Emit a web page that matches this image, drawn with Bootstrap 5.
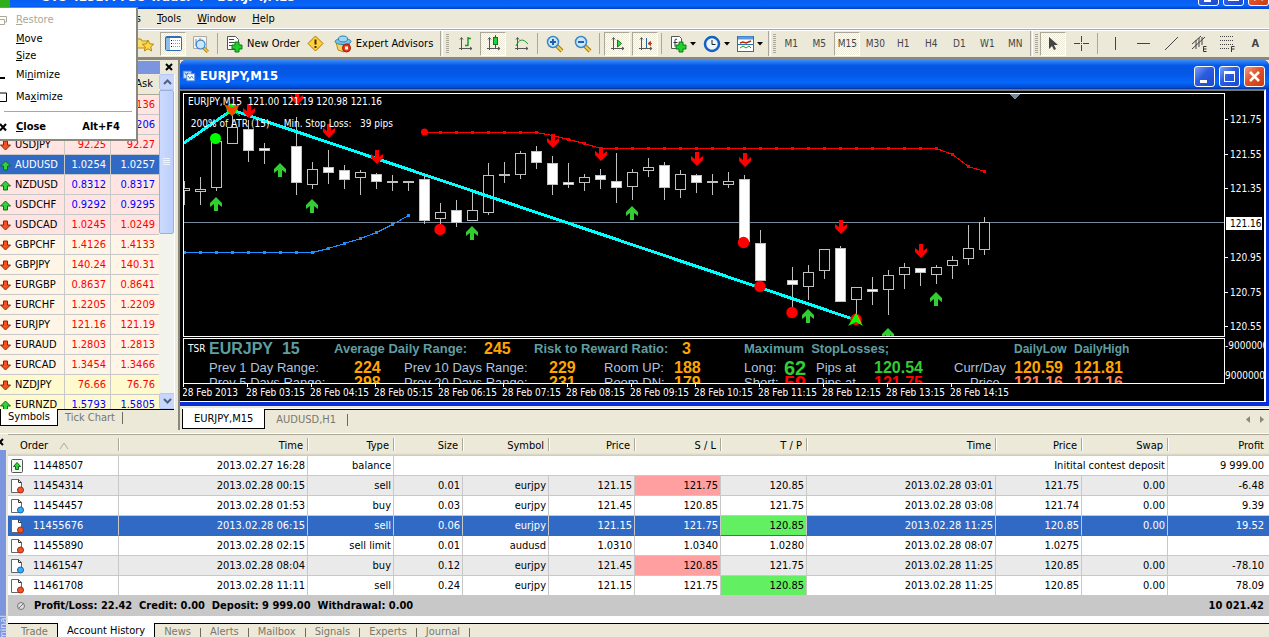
<!DOCTYPE html>
<html lang="en">
<head>
<meta charset="utf-8">
<meta name="viewport" content="width=device-width, initial-scale=1">
<title>Trader 4 - EURJPY,M15</title>
<link rel="stylesheet" href="https://cdn.jsdelivr.net/npm/bootstrap@5.3.0/dist/css/bootstrap.min.css">
<style>
:root{--face:#ece9d8;--line:#c8c8c8;--ui:"DejaVu Sans Condensed","Noto Sans",sans-serif}
body{height:100vh;overflow:hidden;background:var(--face);font:11px/16px var(--ui);color:#000}
button,input{font:inherit;color:inherit}
a{color:inherit;text-decoration:none}
svg{display:block;flex:none}
.flat{border:0;background:none;padding:0}
/* application title bar and menus */
.apptitle{height:9px;overflow:hidden;background:linear-gradient(#0a5cf0,#0667fb 60%,#0040c8);color:#fff;font-weight:700;font-size:13px;padding-left:42px}
.appname{line-height:20px;margin-bottom:2px}
.logo-chip{width:10px;height:9px;background:#2fae1c;margin-left:-42px;margin-right:32px}
.winbtn{width:21px;height:21px;border:1px solid #fff;border-radius:3px;background:linear-gradient(135deg,#7ba0f5,#2a5be0 45%,#1c49cf)}
.winbtn.close-x{background:linear-gradient(135deg,#f0a088,#e0512b 45%,#cc3c12)}
.apptitle .winbtn{margin-bottom:3px}
.menus{height:20px;border-bottom:1px solid #fff}
.hidden-menus{width:141px}
.toolrow{height:31px;border-top:1px solid #aca899;border-bottom:3px solid #8a887c;box-shadow:inset 0 1px #fff;padding-left:131px;color:#444;white-space:nowrap}
.toolrow>*{flex-shrink:0}
.tool{width:28px;height:25px;display:flex;align-items:center;justify-content:center}
.tool.drop{width:34px;gap:3px}
.tool.wide{width:auto;color:#000;gap:4px;padding:0 2px 0 4px}
.tool.advisors{padding-right:6px}
.tool.pressed{width:26px;margin:0 1px;height:24px;border:1px solid #aca899;border-right-color:#fff;border-bottom-color:#fff;background:repeating-conic-gradient(#fff 0 25%,#ece9d8 0 50%) 0 0/2px 2px}
.vsep{width:1px;height:21px;background:#aca899;margin:0 3px 0 2px}
.vsep2{width:3px;height:25px;border-left:1px solid #aca899;border-right:1px solid #fff;margin:0 1px}
.grip{width:3px;height:20px;background:repeating-linear-gradient(#aca899 0 1px,transparent 1px 2px);margin:0 1px}
.advisors+.vsep2+.grip{margin:0 2px}
.tf{font-size:10px}
/* system menu */
.sysmenu{top:7px;left:0;width:138px;background:#fff;border:1px solid #8a887c;border-left:0;border-width:1px 2px 2px 0;z-index:5;padding:2px 0 0}
.sysmenu button{display:flex;align-items:center;height:20px;width:100%;text-align:left}
.sysmenu .mark-cell{width:16px}
.sysmenu .short{height:17px}
.sysmenu .roomy{height:22px}
.sysmenu .tall{height:24px}
.sysmenu .grayed{color:#aca899}
.sysmenu hr{margin:3px 4px;opacity:1;border-color:#aca899}
/* market watch */
.watch{width:180px;border-right:2px solid #8a887c}
.watchhead{height:14px;padding-right:5px}
.watchbar{background:#7b96de;height:13px;margin-right:5px}
.listwrap{flex:1 1 0;min-height:0;overflow:hidden;border-right:1px solid #fff;margin-right:3px}
.quotes{width:159px;table-layout:fixed;border-collapse:separate;border-spacing:0}
.quotes th{height:21px;background:var(--face);font-weight:400;text-align:right;padding:0 6px 0 0;border-bottom:1px solid #aca899}
.quotes td{height:20px;padding:0 4px 0 0;text-align:right;border-right:1px solid var(--line);border-bottom:1px solid var(--line);line-height:19px;background:#fff5e6;color:#f00;overflow:hidden}
.quotes td:first-child{text-align:left;color:#000;padding:0}
.quotes td:first-child svg{display:inline-block;margin-right:4px}
.quotes td:last-child{border-right:0}
.quotes .pink td{background:#ffe4e1}
.quotes .lemon td{background:#fffacd}
.quotes .up td+td{color:#00f}
.quotes .sel td,.quotes .sel td+td,.quotes .sel td:first-child{background:#316ac5;color:#fff}
.sbar{width:17px;background:#f3f3ee}
.sbtn{width:16px;height:16px;border:1px solid #b4c8f6;border-radius:2px;background:#c8d6fb;display:flex;align-items:center;justify-content:center}
.thumb{height:144px;width:15px;border:1px solid #98b0e0;border-radius:2px;background:linear-gradient(90deg,#cbdafe,#bccffb);display:flex;align-items:center;justify-content:center}
.tabs{border-top:1px solid #000;color:#7a776c}
.tabs .on{background:#fff;color:#000;border:1px solid #000;border-top:0;margin-top:-1px}
.tabs button{padding:0 10px}
.watch .tabs button{padding:0 7px}
.tick{width:1px;height:12px;background:#6d6a5f}
/* chart window */
.mdi{background:#0831d9;border-radius:6px 6px 0 0}
.mdititle{height:29px;border-radius:6px 6px 0 0;background:linear-gradient(#3c8cf8,#0557e6 20%,#0557e6 50%,#0667fb 80%,#0048cc);color:#fff;font-weight:700;font-size:13px;padding:4px 4px 0 2px;border-bottom:1px solid #0038b0}
.chartbody{background:#000;border-top:2px solid #77766c;border-right:2px solid #fff;border-bottom:1px solid #fff;margin-right:3px;color:#fff;padding:2px 0 0 3px;font-size:10px;line-height:14px}
.winfoot{height:4px}
.pane{border:1px solid #fff;position:relative;overflow:hidden}
.price{height:244px}
.overlay-text{left:4px;top:1px}
.axis{width:39px}
.scale{height:220px;margin-top:20px;margin-bottom:6px}
.scale div{padding-left:5px;line-height:13px;position:relative;white-space:nowrap}
.scale div::before{content:"";position:absolute;left:0;top:6px;width:3px;height:1px;background:#fff}
.scale .now{background:#fff;color:#000;margin:0 2px 0 1px;padding-left:4px}
.dates{height:17px;font-size:10px;margin-left:-1px}
.dates span{width:64px;flex:none;white-space:nowrap;line-height:18px;position:relative}
.dates span::before{content:"";position:absolute;left:1px;top:0;width:1px;height:3px;background:#fff}
.stats{height:46px;margin-top:1px}
.statgrid{display:grid;grid-template-rows:20px 18px 12px;align-items:center;padding-left:4px;grid-template-columns:21px 125px 20px 50px 80px 50px 15px 55px 70px 70px 40px 32px 58px 80px 60px 60px 60px;font:13px/12px "Liberation Sans",sans-serif;color:#b0c4de;white-space:nowrap}
.statgrid b{font-size:16px}
.statgrid>*{width:0}
.statgrid .lbl{font-size:13px;color:#5f9ea0}
.statgrid .sm{font-size:12px;color:#5f9ea0}
.statgrid .tsr{font:10px/12px var(--ui);color:#fff}
.statgrid .cad{color:#5f9ea0}
.statgrid .big{font-size:20px}
.c1{grid-column:1}.c2{grid-column:2}.c3{grid-column:3}.c4{grid-column:4}.c5{grid-column:5}.c6{grid-column:6}.c7{grid-column:7}.c8{grid-column:8}.c9{grid-column:9}.c10{grid-column:10}.c11{grid-column:11}.c12{grid-column:12}.c13{grid-column:13}.c14{grid-column:14}.c15{grid-column:15}.c16{grid-column:16}.c17{grid-column:17}
.org{color:#ffa500}.grn{color:#32cd32}.rd{color:#f00}.crl{color:#ff7f50}
.charttabs{height:20px;border-top:1px solid #000;margin:3px 0 1px 2px;box-shadow:0 -1px #fff}
.charttabs button{padding:0 11px}
/* terminal */
.terminal{border-top:1px solid #fff;margin-top:3px}
.side{width:8px;overflow:hidden;background:var(--face)}
.side .flat{height:16px}
.sidebar-blue{background:#7b96de;margin-right:2px;color:#d5dff7}
.sidebar-blue span{writing-mode:vertical-rl;transform:rotate(180deg);font-size:10px;line-height:8px;margin-bottom:-6px}
.orders{width:100%;table-layout:fixed;border-collapse:separate;border-spacing:0;border-top:1px solid #aca899;background:#fff}
.orders th{font-weight:400;height:21px;background:linear-gradient(var(--face) 18px,#cbc7b8);text-align:right;padding:0 5px 0 0;line-height:18px;position:relative}
.orders th+th::before{content:"";position:absolute;left:-1px;top:3px;width:2px;height:13px;background:linear-gradient(90deg,#aca899 50%,#fff 50%)}
.orders th:first-child,.orders td:first-child{text-align:left}
.orders th:first-child{padding-left:12px}
.orders td{height:20px;line-height:19px;text-align:right;padding:0 2px 0 0;border-right:1px solid var(--line);border-bottom:1px solid var(--line);white-space:nowrap}
.orders td:last-child{border-right:0;padding-right:5px}
.orders td:first-child svg{display:inline-block;margin:0 9px 0 2px}
.orders .alt td{background:#eaeaea}
.orders .sel td{background:#316ac5;color:#fff;border-bottom-color:#316ac5}
.orders .alt .hit-sl{background:#ff9f9f}
.orders tr .hit-tp,.orders .sel .hit-tp{background:#62f062;color:#000}
.summary{height:20px;background:#c8c8c8;font-weight:700;padding:0 5px 0 4px}
.termtabs{height:24px;margin-top:7px;box-shadow:0 -7px #fff;line-height:14px;align-items:flex-start}
.termtabs button{padding:1px 9px 0}
.termtabs .on{padding-bottom:9px}
</style>
</head>
<body class="d-flex flex-column">
<svg width="0" height="0" class="position-absolute" aria-hidden="true">
<defs>
<symbol id="q-dn" viewBox="0 0 11 11"><path d="M3.500 1h4v4h3L5.500 10 .5 5h3z" fill="#f4511e" stroke="#8c2408"/></symbol>
<symbol id="q-up" viewBox="0 0 11 11"><path d="M3.500 10h4V6h3L5.500 1 .5 6h3z" fill="#2fd43c" stroke="#0c6b14"/></symbol>
<symbol id="doc" viewBox="0 0 14 16"><path d="M1.500 1.500h7l3 3v10h-10z" fill="#fff" stroke="#666"/><path d="M8.500 1.500v3h3" fill="none" stroke="#333"/></symbol>
<symbol id="o-sell" viewBox="0 0 14 16"><use href="#doc"/><circle cx="10.500" cy="12" r="3" fill="#f2552c" stroke="#a82c0c"/></symbol>
<symbol id="o-buy" viewBox="0 0 14 16"><use href="#doc"/><circle cx="10.500" cy="12" r="3" fill="#35b0f5" stroke="#1266a8"/></symbol>
<symbol id="axes" viewBox="0 0 17 17"><path d="M4.500 15V3M2 13.500h13M3 4.500l1.500-2 1.500 2M13 12l2 1.500-2 1.500" fill="none" stroke="#555"/></symbol>
<symbol id="caret" viewBox="0 0 6 4"><path d="M0 0h6L3 3.500z" fill="#000"/></symbol>
<symbol id="lens" viewBox="0 0 18 18"><path d="M11 11l5 5" stroke="#a87a10" stroke-width="4"/><path d="M11 11l5 5" stroke="#f3cf4a" stroke-width="2"/><circle cx="7" cy="7" r="5.500" fill="#c9e6fb" stroke="#3c86c8" stroke-width="1.500"/></symbol>
<symbol id="plus" viewBox="0 0 12 12"><path d="M4 1h4v3h3v4H8v3H4V8H1V4h3z" fill="#21cf2e" stroke="#0c7a15"/></symbol>
</defs>
</svg>

<header class="flex-shrink-0">
  <div class="apptitle d-flex align-items-end">
    <span class="logo-chip flex-shrink-0"></span>
    <span class="appname flex-grow-1">STS 42317: FBS Trader 4 - EURJPY,M15</span>
    <div class="d-flex gap-1 flex-shrink-0">
      <button class="winbtn p-0" aria-label="Minimize application"><svg width="19" height="19"><path d="M5 14.500h7" stroke="#fff" stroke-width="3"/></svg></button>
      <button class="winbtn p-0" aria-label="Maximize application"><svg width="19" height="19"><rect x="4.500" y="5.500" width="10" height="9" fill="none" stroke="#fff"/></svg></button>
      <button class="winbtn close-x p-0" aria-label="Close application"><svg width="19" height="19"><path d="M5 5l9 9M14 5l-9 9" stroke="#fff" stroke-width="2.500"/></svg></button>
    </div>
  </div>
  <nav class="menus d-flex align-items-center">
    <div class="hidden-menus d-flex justify-content-end gap-2"><a href="#">View</a><a href="#">Insert</a><a href="#">Charts</a></div>
    <a href="#" class="ms-3"><u>T</u>ools</a><a href="#" class="ms-3"><u>W</u>indow</a><a href="#" class="ms-3"><u>H</u>elp</a>
  </nav>
  <div class="toolrow d-flex align-items-center">
    <button class="flat tool" aria-label="Favorites"><svg width="18" height="18" viewBox="0 0 18 18"><path d="M0 4h5l1 2h6v7H0z" fill="#f7dc6a" stroke="#b98c18"/><path d="M12 5l1.700 3.800 4 .4-3 2.700 1 4.100-3.700-2.200L8.300 16l1-4.100-3-2.700 4-.4z" fill="#ffd93b" stroke="#b98418"/></svg></button>
    <button class="flat tool pressed" aria-label="Market watch"><svg width="17" height="15" viewBox="0 0 17 15"><rect x=".5" y=".5" width="16" height="14" rx="1" fill="#fff" stroke="#2c6fb5"/><rect x="1" y="1" width="4" height="13" fill="#8fbdea"/><path d="M1 1.500h15" stroke="#2c6fb5"/><path d="M8 4.500h7M8 7.500h7M8 10.500h7" stroke="#999" stroke-dasharray="1 1"/><path d="M6 4.500h1M6 7.500h1M6 10.500h1" stroke="#000"/></svg></button>
    <button class="flat tool" aria-label="Navigator"><svg width="18" height="18" viewBox="0 0 18 18"><path d="M1.500 1.500h13v12h-13z" fill="#f5f4ee" stroke="#aaa"/><path d="M4 4v7M8 3v6" stroke="#888"/><g transform="translate(3 4) scale(.8)"><use href="#lens" width="18" height="18"/></g></svg></button>
    <span class="vsep"></span>
    <button class="flat tool wide"><svg width="18" height="18" viewBox="0 0 18 18"><path d="M2.500 1.500h8l3 3v10h-11z" fill="#fff" stroke="#555"/><path d="M4 4.500h5M4 7.500h7M4 10.500h5" stroke="#444"/><g transform="translate(6 6)"><use href="#plus" width="12" height="12"/></g></svg>New Order</button>
    <button class="flat tool" aria-label="Alert"><svg width="17" height="17" viewBox="0 0 17 17"><path d="M8.500 1L16 8.500 8.500 16 1 8.500z" fill="#ffd23c" stroke="#a87808"/><path d="M8.500 4.500v5M8.500 11v2" stroke="#4a2c00" stroke-width="2"/></svg></button>
    <button class="flat tool wide advisors"><svg width="18" height="18" viewBox="0 0 18 18"><path d="M2 7l2 8 6 2 6-8z" fill="#f4d35a" stroke="#b98c18"/><ellipse cx="9" cy="6.500" rx="8" ry="3" fill="#7cc4ec" stroke="#2d7fb0"/><ellipse cx="9" cy="4" rx="4.500" ry="3" fill="#9fd8f5" stroke="#2d7fb0"/><circle cx="12.500" cy="13" r="4" fill="#e23a1c" stroke="#9d1d08"/><path d="M11 11.500h3v3h-3z" fill="#fff"/></svg>Expert Advisors</button>
    <span class="vsep2"></span><span class="grip"></span>
    <button class="flat tool" aria-label="Bar chart"><svg width="17" height="17" viewBox="0 0 17 17"><use href="#axes"/><path d="M11 2v9M11 3.500h3M8 10.500h3" stroke="#1a9a24" stroke-width="1.500"/></svg></button>
    <button class="flat tool pressed" aria-label="Candlesticks"><svg width="17" height="17" viewBox="0 0 17 17"><use href="#axes"/><path d="M10.500 0v13" stroke="#0c7a15"/><rect x="8.500" y="2.500" width="4" height="7" fill="#21d63a" stroke="#0c7a15"/></svg></button>
    <button class="flat tool" aria-label="Line chart"><svg width="17" height="17" viewBox="0 0 17 17"><use href="#axes"/><path d="M3 11c3-7 7-8 12-2" fill="none" stroke="#1a9a24"/></svg></button>
    <span class="vsep"></span>
    <button class="flat tool" aria-label="Zoom in"><svg width="18" height="18" viewBox="0 0 18 18"><use href="#lens"/><path d="M4 7h6M7 4v6" stroke="#1d62a8" stroke-width="2"/></svg></button>
    <button class="flat tool" aria-label="Zoom out"><svg width="18" height="18" viewBox="0 0 18 18"><use href="#lens"/><path d="M4 7h6" stroke="#1d62a8" stroke-width="2"/></svg></button>
    <span class="vsep"></span>
    <button class="flat tool pressed" aria-label="Auto scroll"><svg width="17" height="17" viewBox="0 0 17 17"><use href="#axes"/><path d="M8.500 5v7l4-3.500z" fill="#3fdc4c" stroke="#0c7a15"/></svg></button>
    <button class="flat tool pressed" aria-label="Chart shift"><svg width="17" height="17" viewBox="0 0 17 17"><use href="#axes"/><path d="M9.500 3v10" stroke="#1d62a8"/><path d="M15 8.500h-3M13.500 6.500l-2.500 2 2.500 2z" fill="#c0390f" stroke="#c0390f"/></svg></button>
    <span class="vsep"></span>
    <button class="flat tool drop" aria-label="Indicators"><svg width="18" height="18" viewBox="0 0 18 18"><path d="M2.500 1.500h8l2 2v10h-10z" fill="#fff" stroke="#555"/><path d="M8 4.500c-2-1-2 0-2 2v5M4.500 7.500h4" fill="none" stroke="#333"/><g transform="translate(6 6)"><use href="#plus" width="12" height="12"/></g></svg><svg width="6" height="4"><use href="#caret"/></svg></button>
    <button class="flat tool drop" aria-label="Periodicity"><svg width="18" height="18" viewBox="0 0 18 18"><circle cx="9" cy="9" r="7" fill="#eaf5ff" stroke="#1560c0" stroke-width="2.500"/><path d="M9 5v4.500h3.500" fill="none" stroke="#222"/></svg><svg width="6" height="4"><use href="#caret"/></svg></button>
    <button class="flat tool drop" aria-label="Templates"><svg width="17" height="16" viewBox="0 0 17 16"><rect x=".5" y=".5" width="16" height="15" fill="#fff" stroke="#2c6fb5"/><path d="M1 2h15" stroke="#5c9bd8" stroke-width="3"/><path d="M3 7l3-1 3 1 5-2" fill="none" stroke="#b02810" stroke-width="1.500"/><path d="M3 12l3-2 3 2 3-2 2 2" fill="none" stroke="#1a9a24"/><path d="M1 8.500h15" stroke="#2c6fb5"/></svg><svg width="6" height="4"><use href="#caret"/></svg></button>
    <span class="vsep2"></span><span class="grip"></span>
    <button class="flat tool tf">M1</button><button class="flat tool tf">M5</button><button class="flat tool tf pressed">M15</button><button class="flat tool tf">M30</button><button class="flat tool tf">H1</button><button class="flat tool tf">H4</button><button class="flat tool tf">D1</button><button class="flat tool tf">W1</button><button class="flat tool tf">MN</button>
    <span class="vsep2"></span><span class="grip"></span>
    <button class="flat tool pressed" aria-label="Cursor"><svg width="16" height="17" viewBox="0 0 16 17"><path d="M4 2v12l3-3 2 4 2-1-2-4h4z" fill="#444"/></svg></button>
    <button class="flat tool" aria-label="Crosshair"><svg width="17" height="17" viewBox="0 0 17 17"><path d="M8.500 1v6M8.500 10v6M1 8.500h6M10 8.500h6M8 8.500h1" stroke="#444"/></svg></button>
    <span class="vsep"></span>
    <button class="flat tool" aria-label="Vertical line"><svg width="17" height="17"><path d="M8.500 2v13" stroke="#444"/></svg></button>
    <button class="flat tool" aria-label="Horizontal line"><svg width="17" height="17"><path d="M2 8.500h13" stroke="#444"/></svg></button>
    <button class="flat tool" aria-label="Trendline"><svg width="17" height="17"><path d="M2 15L15 2" stroke="#444"/></svg></button>
    <button class="flat tool" aria-label="Equidistant channel"><svg width="17" height="17"><path d="M1 14L14 2M1 9l9-8M5 5v9M8 3v9M11 2v8" stroke="#444"/><path d="M15.500 11.500h-3v5h3M12.500 14h3" fill="none" stroke="#333"/></svg></button>
    <button class="flat tool" aria-label="Fibonacci"><svg width="17" height="17"><path d="M1 1.500h14M1 5.500h14M1 9.500h14M1 13.500h9" stroke="#444" stroke-dasharray="1 1"/><path d="M15.500 11.500h-3V17M12.500 14h3" fill="none" stroke="#333"/></svg></button>
    <button class="flat tool fw-bold" aria-label="Text">A</button>
  </div>
</header>

<div class="sysmenu position-absolute">
  <button class="flat grayed"><span class="mark-cell"><svg width="8" height="10" viewBox="0 0 8 10"><path d="M0 1.500h6.500V7H4M0 4.500h4.500v5H0" fill="none" stroke="#aca899"/></svg></span><span><u>R</u>estore</span></button>
  <button class="flat short"><span class="mark-cell"></span><span><u>M</u>ove</span></button>
  <button class="flat short"><span class="mark-cell"></span><span><u>S</u>ize</span></button>
  <button class="flat roomy"><span class="mark-cell"><svg width="8" height="10"><path d="M0 8h5" stroke="#000" stroke-width="2"/></svg></span><span>Mi<u>n</u>imize</span></button>
  <button class="flat roomy"><span class="mark-cell"><svg width="8" height="10"><path d="M0 1h6.500v8.500H0" fill="none" stroke="#000"/></svg></span><span>Ma<u>x</u>imize</span></button>
  <hr>
  <button class="flat tall fw-bold"><span class="mark-cell"><svg width="8" height="10"><path d="M0 2l6 6.500M6 2L0 8.500" stroke="#000" stroke-width="2"/></svg></span><span class="flex-grow-1"><u>C</u>lose</span><span class="me-3">Alt+F4</span></button>
</div>

<main class="d-flex flex-shrink-0">
  <aside class="watch d-flex flex-column flex-shrink-0">
    <div class="watchhead d-flex align-items-center"><div class="watchbar flex-grow-1"></div><button class="flat" aria-label="Close market watch"><svg width="8" height="8"><path d="M1 1l6 6M7 1L1 7" stroke="#000" stroke-width="2"/></svg></button></div>
    <div class="listwrap d-flex">
      <table class="quotes flex-shrink-0 align-self-start">
        <colgroup><col style="width:65px"><col style="width:46px"><col></colgroup>
        <thead><tr><th>Symbol</th><th>Bid</th><th>Ask</th></tr></thead>
        <tbody>
        <tr class="pink"><td><svg width="11" height="11"><use href="#q-dn"/></svg>EURUSD</td><td>1.3134</td><td>1.3136</td></tr>
        <tr class="pink up"><td><svg width="11" height="11"><use href="#q-up"/></svg>GBPUSD</td><td>1.5203</td><td>1.5206</td></tr>
        <tr class="pink"><td><svg width="11" height="11"><use href="#q-dn"/></svg>USDJPY</td><td>92.25</td><td>92.27</td></tr>
        <tr class="sel"><td><svg width="11" height="11"><use href="#q-up"/></svg>AUDUSD</td><td>1.0254</td><td>1.0257</td></tr>
        <tr class="pink up"><td><svg width="11" height="11"><use href="#q-up"/></svg>NZDUSD</td><td>0.8312</td><td>0.8317</td></tr>
        <tr class="pink up"><td><svg width="11" height="11"><use href="#q-up"/></svg>USDCHF</td><td>0.9292</td><td>0.9295</td></tr>
        <tr class="pink"><td><svg width="11" height="11"><use href="#q-dn"/></svg>USDCAD</td><td>1.0245</td><td>1.0249</td></tr>
        <tr><td><svg width="11" height="11"><use href="#q-dn"/></svg>GBPCHF</td><td>1.4126</td><td>1.4133</td></tr>
        <tr><td><svg width="11" height="11"><use href="#q-dn"/></svg>GBPJPY</td><td>140.24</td><td>140.31</td></tr>
        <tr><td><svg width="11" height="11"><use href="#q-dn"/></svg>EURGBP</td><td>0.8637</td><td>0.8641</td></tr>
        <tr><td><svg width="11" height="11"><use href="#q-dn"/></svg>EURCHF</td><td>1.2205</td><td>1.2209</td></tr>
        <tr><td><svg width="11" height="11"><use href="#q-dn"/></svg>EURJPY</td><td>121.16</td><td>121.19</td></tr>
        <tr><td><svg width="11" height="11"><use href="#q-dn"/></svg>EURAUD</td><td>1.2803</td><td>1.2813</td></tr>
        <tr><td><svg width="11" height="11"><use href="#q-dn"/></svg>EURCAD</td><td>1.3454</td><td>1.3466</td></tr>
        <tr class="lemon"><td><svg width="11" height="11"><use href="#q-dn"/></svg>NZDJPY</td><td>76.66</td><td>76.76</td></tr>
        <tr class="lemon up"><td><svg width="11" height="11"><use href="#q-up"/></svg>EURNZD</td><td>1.5793</td><td>1.5805</td></tr>
        </tbody>
      </table>
      <div class="sbar d-flex flex-column">
        <button class="sbtn p-0" aria-label="Scroll up"><svg width="9" height="6"><path d="M1 5l3.500-3.500L8 5" fill="none" stroke="#4d6185" stroke-width="2"/></svg></button>
        <div class="thumb"><svg width="8" height="8"><path d="M0 .5h7M0 2.500h7M0 4.500h7M0 6.500h7" stroke="#eef4fe"/></svg></div>
        <button class="sbtn p-0 mt-auto" aria-label="Scroll down"><svg width="9" height="6"><path d="M1 1l3.500 3.500L8 1" fill="none" stroke="#4d6185" stroke-width="2"/></svg></button>
      </div>
    </div>
    <div class="tabs d-flex align-items-center me-1 mb-1 flex-shrink-0"><button class="flat on">Symbols</button><button class="flat">Tick Chart</button><span class="tick"></span></div>
  </aside>

  <section class="flex-grow-1 overflow-hidden">
    <div class="mdi">
      <div class="mdititle d-flex align-items-center gap-1">
        <svg width="14" height="16" viewBox="0 0 16 16"><rect x="1.500" y="2.500" width="9" height="8" fill="#cfe4ff" stroke="#5a8fe0"/><rect x="5.500" y="5.500" width="9" height="8" fill="#fff" stroke="#5a8fe0"/><path d="M7 8l2 3 2-3 2 3M3 4l2 3 2-3" fill="none" stroke="#2c6fb5"/></svg>
        <span class="flex-grow-1">EURJPY,M15</span>
        <button class="winbtn p-0" aria-label="Minimize chart"><svg width="19" height="19"><path d="M5 14.500h7" stroke="#fff" stroke-width="3"/></svg></button>
        <button class="winbtn p-0" aria-label="Maximize chart"><svg width="19" height="19"><rect x="4.500" y="5.500" width="10" height="9" fill="none" stroke="#fff"/><path d="M4 5.500h11" stroke="#fff" stroke-width="3"/></svg></button>
        <button class="winbtn close-x p-0" aria-label="Close chart"><svg width="19" height="19"><path d="M5 5l9 9M14 5l-9 9" stroke="#fff" stroke-width="2.500"/></svg></button>
      </div>
      <div class="chartbody d-flex">
        <div class="flex-grow-1 overflow-hidden">
          <div class="pane price">
            <svg width="100%" height="242" shape-rendering="crispEdges" id="plot" role="img" aria-label="EURJPY 15 minute candlesticks"></svg>
            <div class="overlay-text position-absolute"><div>EURJPY,M15&nbsp; 121.00 121.19 120.98 121.16</div><div class="mt-2">&nbsp;200% of ATR (15) &nbsp; &nbsp; Min. Stop Loss: &nbsp; 39 pips</div></div>
          </div>
          <div class="pane stats">
            <div class="statgrid">
              <span class="c1 tsr">TSR</span><b class="c2 cad">EURJPY&nbsp; 15</b><b class="c3 lbl">Average Daily Range:</b><b class="c6 org">245</b><b class="c7 lbl">Risk to Reward Ratio:</b><b class="c10 org ps-2">3</b><b class="c11 lbl">Maximum&nbsp; StopLosses;</b><b class="c16 sm">DailyLow</b><b class="c17 sm">DailyHigh</b>
              <span class="c2">Prev 1 Day Range:</span><b class="c4 org">224</b><span class="c5">Prev 10 Days Range:</span><b class="c8 org">229</b><span class="c9">Room UP:</span><b class="c10 org">188</b><span class="c11">Long:</span><b class="c12 grn big">62</b><span class="c13">Pips at</span><b class="c14 grn">120.54</b><span class="c15">Curr/Day</span><b class="c16 org">120.59</b><b class="c17 org">121.81</b>
              <span class="c2">Prev 5 Days Range:</span><b class="c4 org">298</b><span class="c5">Prev 20 Days Range:</span><b class="c8 org">231</b><span class="c9">Room DN:</span><b class="c10 org">179</b><span class="c11">Short:</span><b class="c12 rd big">59</b><span class="c13">Pips at</span><b class="c14 rd">121.75</b><span class="c15 ps-3">Price</span><b class="c16 crl">121.16</b><b class="c17 crl">121.16</b>
            </div>
          </div>
          <div class="dates d-flex overflow-hidden"><span>28 Feb 2013</span><span>28 Feb 03:15</span><span>28 Feb 04:15</span><span>28 Feb 05:15</span><span>28 Feb 06:15</span><span>28 Feb 07:15</span><span>28 Feb 08:15</span><span>28 Feb 09:15</span><span>28 Feb 10:15</span><span>28 Feb 11:15</span><span>28 Feb 12:15</span><span>28 Feb 13:15</span><span>28 Feb 14:15</span></div>
        </div>
        <div class="axis flex-shrink-0 overflow-hidden">
          <div class="scale d-flex flex-column justify-content-between"><div>121.75</div><div>121.55</div><div>121.35</div><div class="now">121.16</div><div>120.95</div><div>120.75</div><div>120.55</div></div>
          <div>-9000000</div><div class="mt-3">90000000</div>
        </div>
      </div>
      <div class="winfoot"></div>
    </div>
    <div class="charttabs tabs d-flex"><button class="flat on">EURJPY,M15</button><button class="flat">AUDUSD,H1</button><span class="tick align-self-center"></span><span class="ms-auto d-flex"><button class="flat px-1" aria-label="Previous tabs"><svg width="6" height="8"><path d="M5 0v7L1 3.500z" fill="#8a887c"/></svg></button><button class="flat px-1" aria-label="Next tabs"><svg width="6" height="8"><path d="M1 0v7l4-3.500z" fill="#8a887c"/></svg></button></span></div>
  </section>
</main>

<section class="terminal d-flex flex-grow-1">
  <div class="side d-flex flex-column flex-shrink-0">
    <button class="flat" aria-label="Close terminal"><svg width="6" height="8"><path d="M-3 1l6 6M3 1l-6 6" stroke="#000" stroke-width="2"/></svg></button>
    <div class="sidebar-blue flex-grow-1 d-flex align-items-end"><span>Terminal</span></div>
  </div>
  <div class="flex-grow-1 overflow-hidden">
    <table class="orders">
      <colgroup><col style="width:111px"><col style="width:189px"><col style="width:86px"><col style="width:69px"><col style="width:86px"><col style="width:86px"><col style="width:86px"><col style="width:86px"><col><col style="width:86px"><col style="width:86px"><col style="width:101px"></colgroup>
      <thead><tr><th>Order <svg class="d-inline ms-2" width="10" height="8"><path d="M1 7l4-6 4 6" fill="none" stroke="#aca899"/></svg></th><th>Time</th><th>Type</th><th>Size</th><th>Symbol</th><th>Price</th><th>S / L</th><th>T / P</th><th>Time</th><th>Price</th><th>Swap</th><th>Profit</th></tr></thead>
      <tbody>
      <tr><td><svg width="14" height="16" viewBox="0 0 14 16"><rect x="1.500" y="1.500" width="11" height="13" rx="1" fill="#f6f6f6" stroke="#555"/><path d="M5.500 11.500h3v-3h2L7 4.500 3.500 8.500h2z" fill="#2fd43c" stroke="#0c6b14"/></svg>11448507</td><td>2013.02.27 16:28</td><td>balance</td><td colspan="8">Initital contest deposit</td><td>9 999.00</td></tr>
      <tr class="alt"><td><svg width="14" height="16"><use href="#o-sell"/></svg>11454314</td><td>2013.02.28 00:15</td><td>sell</td><td>0.01</td><td>eurjpy</td><td>121.15</td><td class="hit-sl">121.75</td><td>120.85</td><td>2013.02.28 03:01</td><td>121.75</td><td>0.00</td><td>-6.48</td></tr>
      <tr><td><svg width="14" height="16"><use href="#o-buy"/></svg>11454457</td><td>2013.02.28 01:53</td><td>buy</td><td>0.03</td><td>eurjpy</td><td>121.45</td><td>120.85</td><td>121.75</td><td>2013.02.28 03:08</td><td>121.74</td><td>0.00</td><td>9.39</td></tr>
      <tr class="sel"><td><svg width="14" height="16"><use href="#o-sell"/></svg>11455676</td><td>2013.02.28 06:15</td><td>sell</td><td>0.06</td><td>eurjpy</td><td>121.15</td><td>121.75</td><td class="hit-tp">120.85</td><td>2013.02.28 11:25</td><td>120.85</td><td>0.00</td><td>19.52</td></tr>
      <tr><td><svg width="14" height="16"><use href="#o-sell"/></svg>11455890</td><td>2013.02.28 02:15</td><td>sell limit</td><td>0.01</td><td>audusd</td><td>1.0310</td><td>1.0340</td><td>1.0280</td><td>2013.02.28 08:07</td><td>1.0275</td><td></td><td></td></tr>
      <tr class="alt"><td><svg width="14" height="16"><use href="#o-buy"/></svg>11461547</td><td>2013.02.28 08:04</td><td>buy</td><td>0.12</td><td>eurjpy</td><td>121.45</td><td class="hit-sl">120.85</td><td>121.75</td><td>2013.02.28 11:25</td><td>120.85</td><td>0.00</td><td>-78.10</td></tr>
      <tr><td><svg width="14" height="16"><use href="#o-sell"/></svg>11461708</td><td>2013.02.28 11:11</td><td>sell</td><td>0.24</td><td>eurjpy</td><td>121.15</td><td>121.75</td><td class="hit-tp">120.85</td><td>2013.02.28 11:25</td><td>120.85</td><td>0.00</td><td>78.09</td></tr>
      </tbody>
    </table>
    <div class="summary d-flex align-items-center"><svg width="10" height="10" class="me-2 ms-1"><circle cx="5" cy="5" r="3.500" fill="#ddd" stroke="#777"/><path d="M2 8l6-6" stroke="#777"/></svg><span class="flex-grow-1">Profit/Loss: 22.42&nbsp; Credit: 0.00&nbsp; Deposit: 9 999.00&nbsp; Withdrawal: 0.00</span><span>10 021.42</span></div>
    <div class="termtabs tabs d-flex"><button class="flat ms-1">Trade</button><button class="flat on">Account History</button><button class="flat">News</button><span class="tick mt-1"></span><button class="flat">Alerts</button><span class="tick mt-1"></span><button class="flat">Mailbox</button><span class="tick mt-1"></span><button class="flat">Signals</button><span class="tick mt-1"></span><button class="flat">Experts</button><span class="tick mt-1"></span><button class="flat">Journal</button><span class="tick mt-1"></span></div>
  </div>
</section>

<script src="https://cdn.jsdelivr.net/npm/bootstrap@5.3.0/dist/js/bootstrap.bundle.min.js"></script>
<script>
// Candles: bar index, high, body top, body bottom, low, filled
const bars=[[0,181,188,190,204,0],[1,177,189,191,204,0],[2,141,141,187,190,0],[3,114,127,143,143,0],[4,120,129,150,161,1],[5,143,148,150,163,1],[7,117,146,182,194,1],[8,162,169,184,188,0],[9,150,167,172,183,1],[10,165,170,179,188,1],[11,170,172,177,194,0],[12,173,174,181,188,1],[13,175,181,182,190,1],[14,182,181,182,190,1],[15,176,179,220,223,1],[16,203,212,218,224,0],[17,200,210,222,226,1],[18,192,210,220,220,0],[19,163,175,212,214,0],[20,162,174,175,182,1],[21,151,153,174,178,0],[22,146,151,162,168,1],[23,156,163,184,194,1],[24,163,182,184,187,1],[25,174,177,182,190,0],[26,169,175,179,188,1],[27,153,181,187,202,1],[28,169,172,186,199,0],[29,158,167,170,176,0],[30,162,165,187,199,1],[31,170,174,189,197,0],[32,174,175,182,192,1],[33,174,181,182,194,1],[34,172,181,184,187,0],[35,175,179,241,241,1],[36,230,243,280,281,1],[38,267,280,284,307,1],[39,265,272,286,299,0],[40,249,249,270,278,0],[41,246,248,301,301,1],[42,287,287,299,318,0],[43,277,289,291,304,1],[44,270,275,289,314,0],[45,263,267,274,288,0],[46,268,268,272,285,1],[47,265,267,274,283,0],[48,256,260,265,278,0],[49,225,248,258,264,0],[50,217,222,249,254,0]];
const X=i=>184.5+16*i;
let s='<g transform="translate(-184 -94)"><path d="M184 222.500H4000" stroke="#778899"/><path d="M1009 94h11l-5 5z" fill="#778899"/>';
for(const [i,h,t,b,l,f] of bars)s+=`<path d="M${X(i)} ${h}V${l+1}" stroke="#c0c0c0"/><rect x="${X(i)-5}" y="${t+.5}" width="10" height="${b-t}" fill="${f?'#fff':'#000'}" stroke="#c0c0c0"/>`;
const trail=(p,c)=>{s+=`<polyline points="${p.map(q=>q.join()).join(' ')}" fill="none" stroke="${c}"/>`;p.forEach(q=>s+=`<rect x="${q[0]-1.5}" y="${q[1]-1.5}" width="3" height="3" fill="${c}"/>`)};
const red=[];for(let i=15;i<=50;i++)red.push([X(i),i<23?132.5:({23:135.5,24:139.5,25:143.5,48:154.5,49:166.5,50:171.5})[i]||148.5]);
const blue=[];for(let i=0;i<=14;i++)blue.push([X(i),({9:248.5,10:243.5,11:238.5,12:232.5,13:224.5,14:215.5})[i]||252.5]);
trail(red,'#f00');trail(blue,'#1e90ff');
s+='<polyline points="184,143 232,110 856,320" fill="none" stroke="#0ff" stroke-width="3"/>';
s+='<g shape-rendering="auto">';
const dot=(x,y,r,c)=>s+=`<circle cx="${x}" cy="${y}" r="${r}" fill="${c}"/>`;
dot(424.5,132,3.5,'#f00');dot(215.5,138.5,5.5,'#0f0');dot(232,109,5.5,'#0f0');
[[440,229.5],[743.5,242.5],[760,286.5],[792,312.5],[856,319.5]].forEach(p=>dot(...p,5.7,'#f00'));
[[216,197],[280,163],[312,199],[472,226],[632,206],[808,309],[936,292],[888,328]].forEach(([x,y])=>s+=`<path d="M${x} ${y}l6 6v4l-4-3v7h-4v-7l-4 3v-4z" fill="#32cd32"/>`);
[[249,118],[297,105],[329,138],[377,164],[553,148],[601,161],[697,166],[745,167],[841,234],[921,258]].forEach(([x,y])=>s+=`<path d="M${x} ${y}l6-6v-4l-4 3v-7h-4v7l-4-3v4z" fill="#f00"/>`);
s+='<path d="M225 105l7 3 7-3-7 11zM232 108v6" fill="#ff4500" stroke="#ff4500"/><path d="M224 116l4-3M240 116l-4-3" stroke="#0f0"/><path d="M856 313l-8 13 8-4 7 4z" fill="#0f0"/><path d="M857 315l4 8" stroke="#f90"/></g></g>';
document.getElementById('plot').innerHTML=s;
</script>
</body>
</html>
